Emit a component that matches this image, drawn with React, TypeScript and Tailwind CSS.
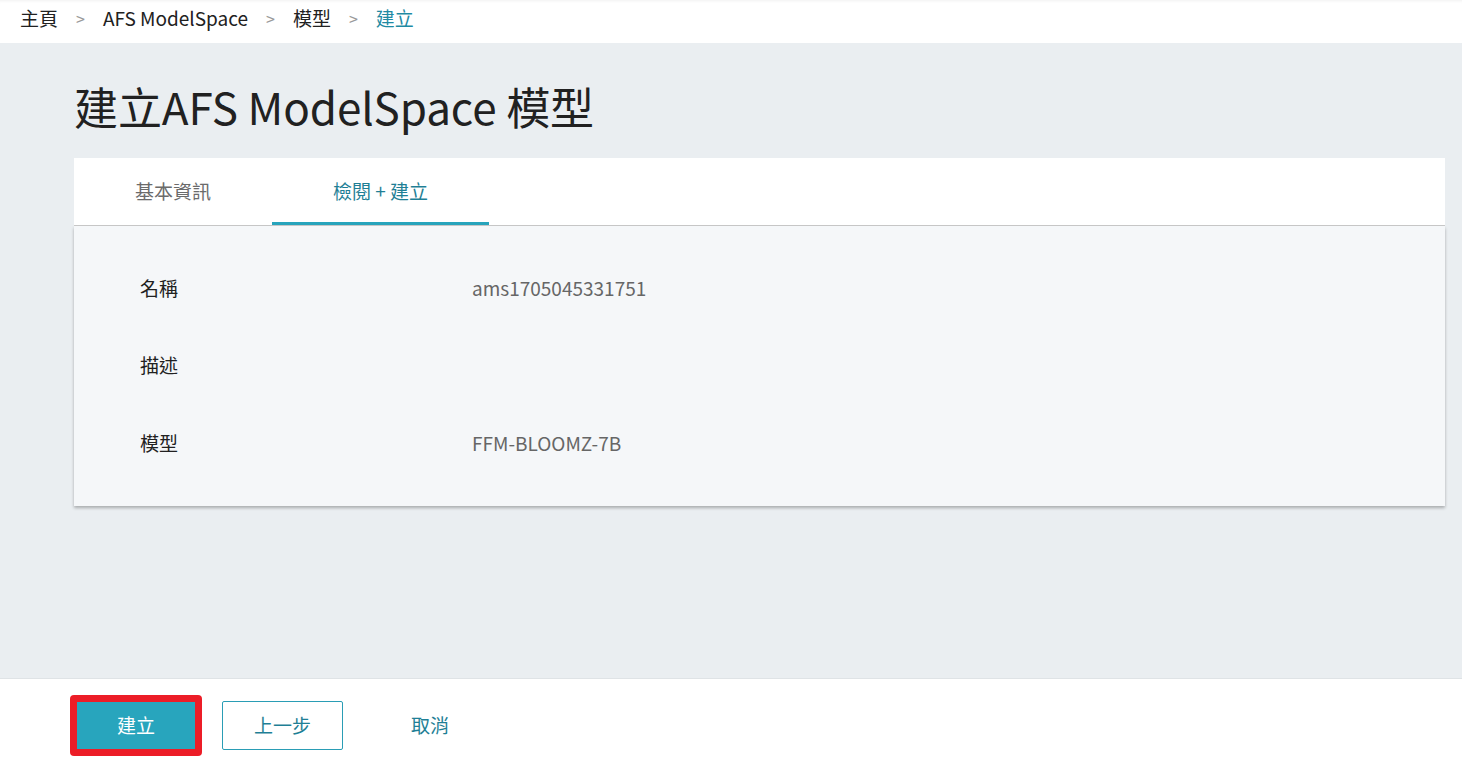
import { Fragment } from 'react';

const font = { fontFamily: '"Noto Sans CJK TC", "Noto Sans", sans-serif' };

const crumbs = ['主頁', 'AFS ModelSpace', '模型'];

const rows = [
  { label: '名稱', value: 'ams1705045331751' },
  { label: '描述', value: '' },
  { label: '模型', value: 'FFM-BLOOMZ-7B' },
];

export default function App() {
  return (
    <div className="flex h-[768px] w-full flex-col bg-[#eaeef1] text-[#212121]" style={font}>
      {/* Breadcrumb */}
      <div className="flex h-[43px] shrink-0 items-center bg-white pb-[7px] pl-5 text-[19px] shadow-[inset_0_3px_3px_-2px_rgba(0,0,0,0.06)]">
        {crumbs.map((c) => (
          <Fragment key={c}>
            <span>{c}</span>
            <span className="mx-[18px] text-[16px] text-[#9a9a9a]">&gt;</span>
          </Fragment>
        ))}
        <span className="text-[#1f8aa3]">建立</span>
      </div>

      {/* Main */}
      <div className="flex-1 px-[74px] pr-[17px]">
        <h1 className="mt-[35px] text-[44px] leading-[56px] font-normal tracking-[-0.1px]">
          建立AFS ModelSpace 模型
        </h1>

        <div className="mt-[24px] flex h-[68px] items-stretch border-b border-[#c9c9c9] bg-white text-[19px]">
          <div className="flex w-[198px] items-center justify-center text-[#6b6b6b]">基本資訊</div>
          <div className="flex w-[217px] items-center justify-center border-b-[3px] border-[#27a4bc] pt-[3px] text-[#1f7f96]">
            檢閱 + 建立
          </div>
        </div>

        <div className="flex h-[280px] flex-col bg-[#f5f7f9] pt-[48px] text-[19px] shadow-[0_2px_3px_rgba(0,0,0,0.28)]">
          {rows.map((r) => (
            <div key={r.label} className="flex h-[77.5px] items-start pl-[66px]">
              <span className="w-[332px]">{r.label}</span>
              <span className="text-[#666666]">{r.value}</span>
            </div>
          ))}
        </div>
      </div>

      {/* Footer */}
      <div className="flex h-[90px] shrink-0 items-center border-t border-[#dfe3e6] bg-white pt-[4px] pl-[70px] text-[19px]">
        <div className="rounded-[4px] bg-[#ec1d27] p-[7px]">
          <button className="h-[47px] w-[118px] bg-[#28a5bd] text-white">建立</button>
        </div>
        <button className="ml-[20px] h-[49px] w-[121px] rounded-[2px] border border-[#2a9db5] text-[#1f7f96]">
          上一步
        </button>
        <button className="ml-[50px] h-[49px] w-[74px] text-[#1f7f96]">取消</button>
      </div>
    </div>
  );
}
